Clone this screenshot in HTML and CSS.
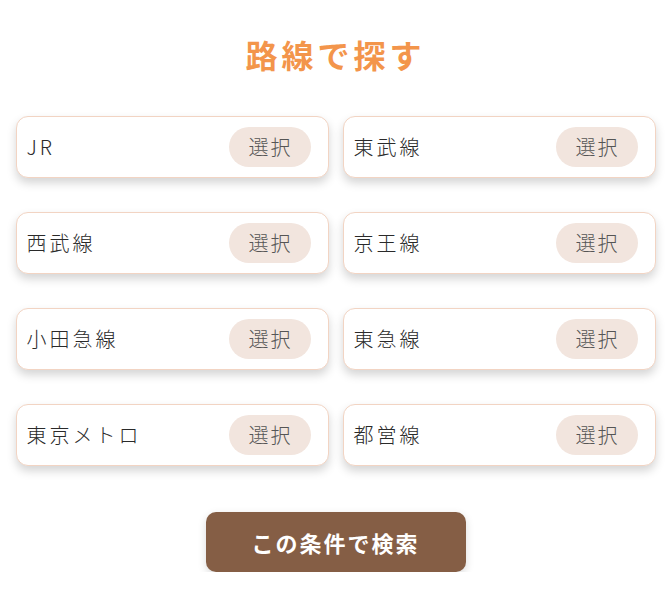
FILE: index.html
```html
<!DOCTYPE html>
<html lang="ja">
<head>
<meta charset="utf-8">
<title>路線で探す</title>
<link rel="stylesheet" href="styles.css">
</head>
<body>
<main class="page">
  <h1 class="title">路線で探す</h1>
  <div class="grid">
    <div class="card"><span class="label">JR</span><button class="pick">選択</button></div>
    <div class="card"><span class="label">東武線</span><button class="pick">選択</button></div>
    <div class="card"><span class="label">西武線</span><button class="pick">選択</button></div>
    <div class="card"><span class="label">京王線</span><button class="pick">選択</button></div>
    <div class="card"><span class="label">小田急線</span><button class="pick">選択</button></div>
    <div class="card"><span class="label">東急線</span><button class="pick">選択</button></div>
    <div class="card"><span class="label">東京メトロ</span><button class="pick">選択</button></div>
    <div class="card"><span class="label">都営線</span><button class="pick">選択</button></div>
  </div>
  <div class="actions">
    <button class="search">この条件で検索</button>
  </div>
</main>
</body>
</html>
```
FILE: styles.css
```css
* { box-sizing: border-box; }
body {
  margin: 0;
  background: #fff;
  font-family: "Noto Sans CJK JP", "Noto Sans", sans-serif;
  color: #333;
}
.page {
  max-width: 640px;
  margin: 0 auto;
  padding-top: 30px;
}
.title {
  margin: 0 0 38px;
  text-align: center;
  font-size: 32px;
  line-height: 48px;
  font-weight: 700;
  letter-spacing: 4px;
  color: #f3954b;
}
.grid {
  display: grid;
  grid-template-columns: 1fr 1fr;
  column-gap: 14px;
  row-gap: 34px;
}
.card {
  display: flex;
  align-items: center;
  justify-content: space-between;
  height: 62px;
  padding: 0 17px 0 10px;
  border: 1px solid #f2d4c3;
  border-radius: 12px;
  background: #fff;
  box-shadow: 0 5px 10px rgba(0, 0, 0, 0.17);
}
.label {
  font-size: 20px;
  line-height: 24px;
  font-weight: 200;
  letter-spacing: 3px;
  color: #2a2a2a;
  margin-top: -1px;
}
.pick {
  height: 40px;
  width: 82px;
  padding: 0 0 2px 2px;
  border: none;
  border-radius: 20px;
  background: #f2e5de;
  font-family: inherit;
  font-size: 20px;
  font-weight: 200;
  letter-spacing: 2px;
  color: #555;
}
.actions {
  display: flex;
  justify-content: center;
  margin-top: 46px;
}
.search {
  width: 260px;
  height: 60px;
  border: none;
  border-radius: 10px;
  background: #855e45;
  color: #fff;
  font-family: inherit;
  font-size: 22px;
  font-weight: 700;
  letter-spacing: 2px;
  box-shadow: 0 3px 8px rgba(0, 0, 0, 0.15);
}
```
